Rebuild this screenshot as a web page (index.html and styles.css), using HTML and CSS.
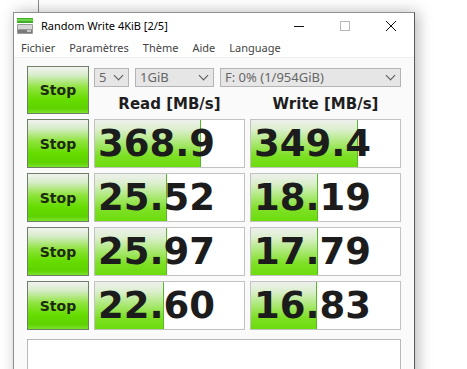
FILE: index.html
```html
<html>
    <head>
        <link rel="stylesheet" href="styles.css">
    </head>
    <body>
        <div class="back-window"></div>
        <div class="window">
            <div class="titlebar">
                <svg class="app-icon" width="16" height="16" viewBox="0 0 16 16">
                    <rect x="0" y="0" width="16" height="5" fill="#3fae2a"/>
                    <rect x="0" y="1" width="16" height="2" fill="#6fd64a"/>
                    <rect x="0" y="6" width="16" height="10" rx="1" fill="#9a9a9a"/>
                    <rect x="1" y="7" width="14" height="4" fill="#d6d6d6"/>
                    <rect x="1" y="12" width="14" height="3" fill="#7a7a7a"/>
                    <rect x="10" y="12" width="4" height="2" fill="#c8c8c8"/>
                </svg>
                <span class="title">Random Write 4KiB [2/5]</span>
                <div class="caption">
                    <div class="cap-btn">
                        <svg width="10" height="10" viewBox="0 0 10 10"><line x1="0" y1="5.5" x2="10" y2="5.5" stroke="#111" stroke-width="1"/></svg>
                    </div>
                    <div class="cap-btn">
                        <svg width="10" height="10" viewBox="0 0 10 10"><rect x="0.5" y="0.5" width="9" height="9" fill="none" stroke="#b8b8b8" stroke-width="1"/></svg>
                    </div>
                    <div class="cap-btn">
                        <svg width="10" height="10" viewBox="0 0 10 10"><path d="M0 0 L10 10 M10 0 L0 10" stroke="#111" stroke-width="1"/></svg>
                    </div>
                </div>
            </div>
            <div class="menubar">
                <span>Fichier</span>
                <span>Paramètres</span>
                <span>Thème</span>
                <span>Aide</span>
                <span>Language</span>
            </div>
            <div class="content">
                <div class="grid">
                    <div class="stop">Stop</div>
                    <div class="controls">
                        <div class="combos">
                            <div class="combo c-count">5<span class="chev"></span></div>
                            <div class="combo c-size">1GiB<span class="chev"></span></div>
                            <div class="combo c-drive">F: 0% (1/954GiB)<span class="chev"></span></div>
                        </div>
                        <div class="heads">
                            <div class="head">Read [MB/s]</div>
                            <div class="head">Write [MB/s]</div>
                        </div>
                    </div>

                    <div class="stop">Stop</div>
                    <div class="val" style="--w:106px">368.9</div>
                    <div class="val" style="--w:107px">349.4</div>

                    <div class="stop">Stop</div>
                    <div class="val" style="--w:72px">25.52</div>
                    <div class="val" style="--w:67px">18.19</div>

                    <div class="stop">Stop</div>
                    <div class="val" style="--w:72px">25.97</div>
                    <div class="val" style="--w:67px">17.79</div>

                    <div class="stop">Stop</div>
                    <div class="val" style="--w:69px">22.60</div>
                    <div class="val" style="--w:66px">16.83</div>
                </div>
                <div class="comment"></div>
            </div>
        </div>
    </body>
</html>
```

FILE: styles.css
```css
body {
    margin: 0;
    width: 467px;
    height: 369px;
    overflow: hidden;
    background: #fff;
    position: relative;
    font-family: "Noto Sans", "Open Sans", sans-serif;
}

/* the window behind, only its edge shows */
.back-window {
    position: absolute;
    left: 38px;
    top: 0;
    width: 1px;
    height: 12px;
    background: #8a8a8a;
}

.window {
    position: absolute;
    left: 13px;
    top: 12px;
    width: 400px;
    height: 380px;
    border: 1px solid #8f8f8f;
    border-right-color: #5a5a5a;
    background: #fff;
    box-shadow: 3px 0 14px rgba(0,0,0,0.28);
}

.titlebar {
    height: 25px;
    display: flex;
    align-items: center;
    background: #fff;
}

.app-icon {
    margin-left: 3px;
    margin-right: 8px;
}

.title {
    font-size: 11px;
    color: #000;
    flex: 1;
}

.caption {
    display: flex;
    height: 25px;
}

.cap-btn {
    width: 46px;
    display: flex;
    align-items: center;
    justify-content: center;
}

.menubar {
    height: 19px;
    display: flex;
    align-items: center;
    font-size: 11px;
    color: #444;
    border-bottom: 1px solid #efefef;
    padding-left: 1px;
}

.menubar span {
    padding: 0 6px 0 6px;
    margin-right: 2px;
}

.content {
    background: #fafafa;
    padding: 8px 13px 0 13px;
}

.grid {
    display: grid;
    grid-template-columns: 62px 151px 151px;
    grid-template-rows: 48px 49px 49px 49px 49px;
    column-gap: 5px;
    row-gap: 5px;
}

.stop {
    box-sizing: border-box;
    border: 1px solid #6e7f68;
    background: linear-gradient(to bottom, #f2f2f0 0%, #d6ecc8 18%, #8ee43c 45%, #66dc00 70%, #5ed200 90%, #7be22a 100%);
    font-family: "DejaVu Sans", sans-serif;
    font-weight: bold;
    font-size: 14px;
    color: #1c2a12;
    display: flex;
    align-items: center;
    justify-content: center;
}

.controls {
    grid-column: 2 / 4;
    display: flex;
    flex-direction: column;
}

.combos {
    display: flex;
    gap: 6px;
    margin-top: 2px;
}

.combo {
    box-sizing: border-box;
    height: 19px;
    border: 1px solid #b4b4b4;
    background: #e6e6e6;
    color: #666;
    font-size: 13px;
    line-height: 17px;
    padding-left: 4px;
    position: relative;
}

.c-count { width: 35px; }
.c-size { width: 79px; }
.c-drive { flex: 1; }

.chev {
    position: absolute;
    right: 6px;
    top: 3px;
    width: 6px;
    height: 6px;
    border-right: 1.4px solid #555;
    border-bottom: 1.4px solid #555;
    transform: rotate(45deg);
}

.heads {
    display: flex;
    gap: 5px;
    margin-top: 8px;
}

.head {
    width: 151px;
    text-align: center;
    font-family: "DejaVu Sans", sans-serif;
    font-weight: bold;
    font-size: 15px;
    color: #1e1e1e;
}

.val {
    box-sizing: border-box;
    border: 1px solid #c2c2c2;
    background-color: #fff;
    background-image:
        linear-gradient(to left, #56b82a 1px, transparent 1px),
        linear-gradient(to bottom, #eef0ec 0%, #dcefce 20%, #a8e870 50%, #7ee026 75%, #6cdc0c 100%);
    background-size: var(--w) 100%;
    background-repeat: no-repeat;
    font-family: "DejaVu Sans", sans-serif;
    font-weight: bold;
    font-size: 37px;
    color: #1c1c1c;
    display: flex;
    align-items: center;
    padding-left: 3px;
}

.comment {
    margin-top: 9px;
    height: 40px;
    border: 1px solid #b8b8b8;
    background: #fff;
}
```
